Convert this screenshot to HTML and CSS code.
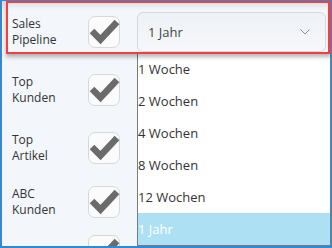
FILE: index.html
```html
<!DOCTYPE html>
<html lang="de">
<head>
    <meta charset="UTF-8">
    <meta name="viewport" content="width=device-width, initial-scale=1.0">
    <title>Dashboard Einstellungen</title>
    <link rel="stylesheet" href="styles.css">
</head>
<body>
    <div class="frame">
        <div class="settings">
            <div class="row">
                <div class="row-label">Sales<br>Pipeline</div>
                <div class="check">
                    <svg viewBox="0 0 32 32" width="32" height="32"><polyline points="4,15 12.5,23.5 29,6" /></svg>
                </div>
                <div class="select">
                    <span class="select-value">1 Jahr</span>
                    <svg class="chevron" viewBox="0 0 10 6" width="10" height="6"><polyline points="0.5,0.5 5,5 9.5,0.5" /></svg>
                </div>
            </div>
            <div class="row">
                <div class="row-label">Top<br>Kunden</div>
                <div class="check">
                    <svg viewBox="0 0 32 32" width="32" height="32"><polyline points="4,15 12.5,23.5 29,6" /></svg>
                </div>
            </div>
            <div class="row">
                <div class="row-label">Top<br>Artikel</div>
                <div class="check">
                    <svg viewBox="0 0 32 32" width="32" height="32"><polyline points="4,15 12.5,23.5 29,6" /></svg>
                </div>
            </div>
            <div class="row">
                <div class="row-label">ABC<br>Kunden</div>
                <div class="check">
                    <svg viewBox="0 0 32 32" width="32" height="32"><polyline points="4,15 12.5,23.5 29,6" /></svg>
                </div>
            </div>
            <div class="row">
                <div class="row-label"></div>
                <div class="check">
                    <svg viewBox="0 0 32 32" width="32" height="32"><polyline points="4,15 12.5,23.5 29,6" /></svg>
                </div>
            </div>
        </div>

        <ul class="dropdown">
            <li>1 Woche</li>
            <li>2 Wochen</li>
            <li>4 Wochen</li>
            <li>8 Wochen</li>
            <li>12 Wochen</li>
            <li class="active">1 Jahr</li>
        </ul>

        <div class="highlight"></div>
    </div>
</body>
</html>
```

FILE: styles.css
```css
:root {
    --frame-blue: #2f8ad6;
    --page-bg: #f3f6fa;
    --text-color: #333;
    --mark-color: #6b6b6b;
    --annotation: #f0403f;
}

* {
    margin: 0;
    padding: 0;
    box-sizing: border-box;
}

body {
    font-family: 'Open Sans', 'Noto Sans', sans-serif;
    color: var(--text-color);
    background: #fff;
}

.frame {
    position: relative;
    width: 332px;
    height: 248px;
    overflow: hidden;
    border: 1px solid var(--frame-blue);
    border-left-width: 2px;
    border-bottom-width: 2px;
    background: var(--page-bg);
    box-shadow: inset 0 8px 8px -6px rgba(0, 0, 0, 0.18);
}

.settings {
    display: flex;
    flex-direction: column;
    gap: 22px;
    padding-top: 11px;
}

.row {
    display: flex;
    align-items: center;
}

.row:nth-child(3) {
    margin-top: 4px;
}

.row:nth-child(5) {
    margin-top: -5px;
}

.row-label {
    flex: 0 0 86px;
    padding-left: 10px;
    font-size: 12px;
    line-height: 16px;
    min-height: 32px;
}

.check {
    flex: 0 0 32px;
    height: 32px;
    border: 1px solid #d8d8d8;
    border-radius: 7px;
    background: #fbfbfb;
    overflow: visible;
}

.check svg {
    display: block;
    margin: -1px;
    overflow: visible;
}

.check polyline {
    fill: none;
    stroke: var(--mark-color);
    stroke-width: 6.5;
    stroke-linecap: butt;
    stroke-linejoin: miter;
}

.select {
    display: flex;
    align-items: center;
    justify-content: space-between;
    width: 189px;
    height: 40px;
    margin-left: 17px;
    padding: 0 15px 0 10px;
    border: 1px solid #d5d9df;
    border-radius: 6px;
    background: linear-gradient(#eef1f5, #f6f8fb);
    font-size: 13px;
    color: #444;
}

.chevron polyline {
    fill: none;
    stroke: #8b9099;
    stroke-width: 1;
}

.dropdown {
    position: absolute;
    left: 135px;
    top: 51px;
    width: 194px;
    list-style: none;
    border: 1px solid #7b7b7b;
    background: #fff;
}

.dropdown li {
    height: 32px;
    line-height: 32px;
    font-size: 13px;
    color: var(--text-color);
}

.dropdown li.active {
    background: #aee0f4;
    color: #fff;
}

.highlight {
    position: absolute;
    left: 4px;
    top: 0;
    width: 325px;
    height: 53px;
    border: 2px solid var(--annotation);
    border-right-width: 3px;
    box-shadow: 0 3px 4px rgba(0, 0, 0, 0.28);
}
```
